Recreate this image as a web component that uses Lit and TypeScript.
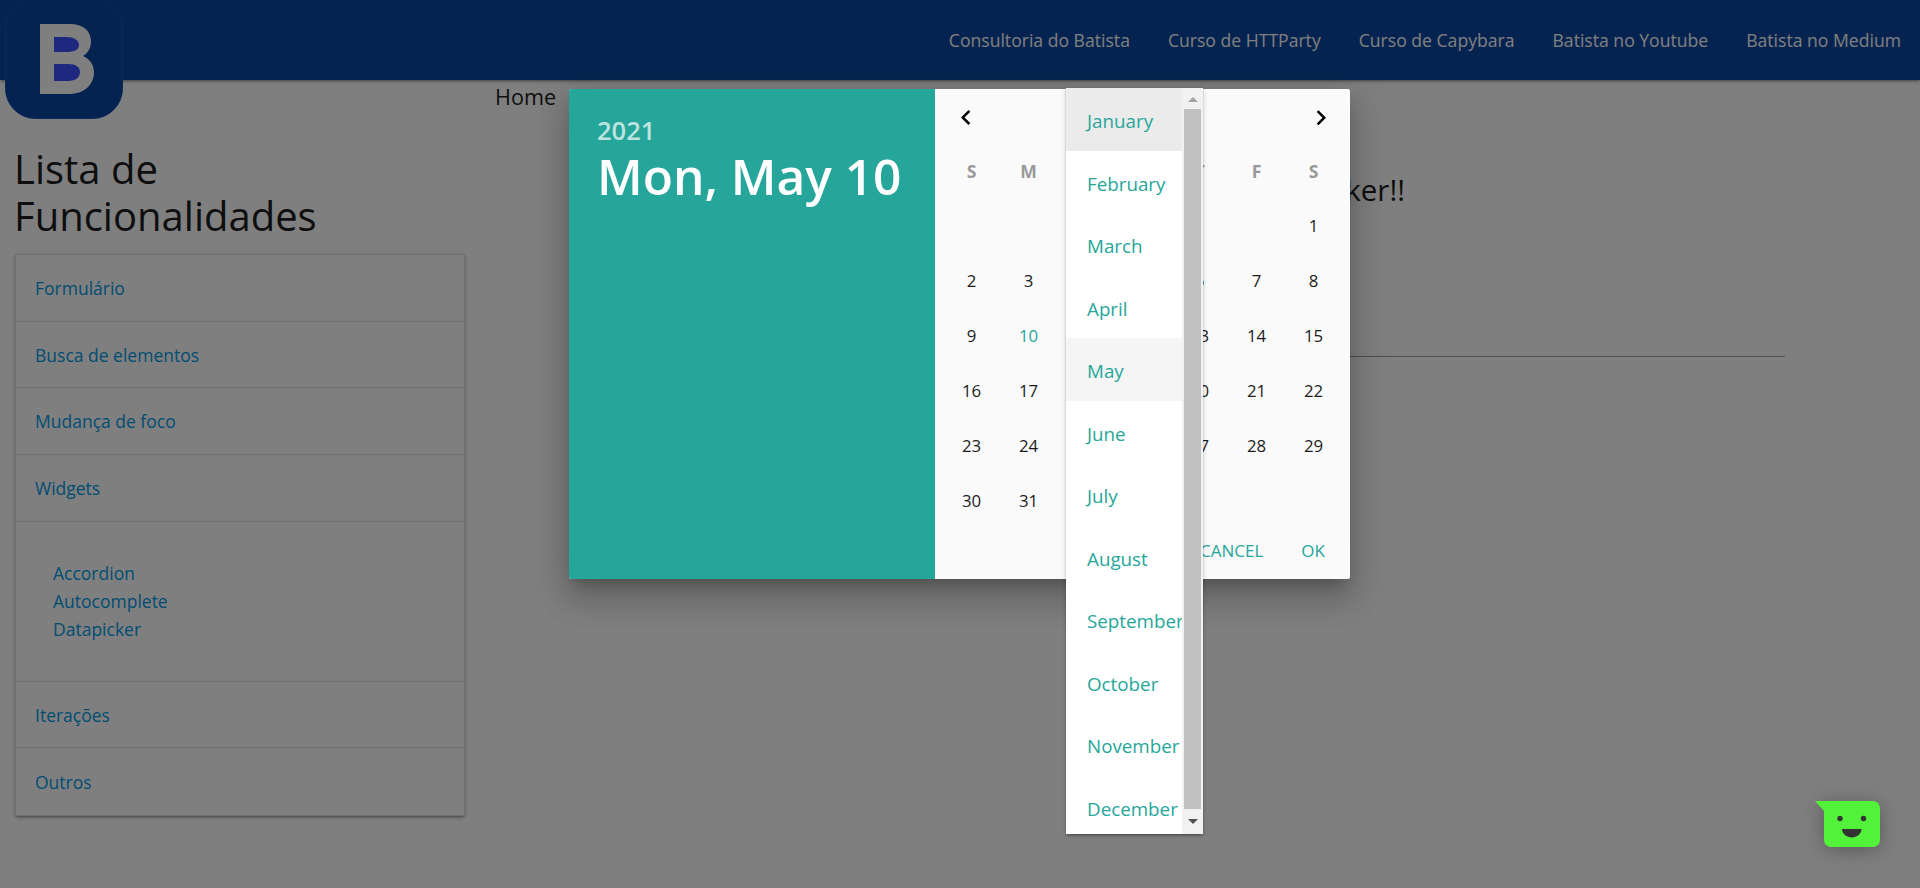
import { LitElement, html, css } from 'lit'
import { customElement } from 'lit/decorators.js'

const NAV_LINKS = ['Consultoria do Batista', 'Curso de HTTParty', 'Curso de Capybara', 'Batista no Youtube', 'Batista no Medium']
const MONTHS = ['January', 'February', 'March', 'April', 'May', 'June', 'July', 'August', 'September', 'October', 'November', 'December']
const WEEKDAYS = ['S', 'M', 'T', 'W', 'T', 'F', 'S']
const FIRST_WEEKDAY = 6
const DAYS_IN_MONTH = 31
const TODAY = 10

@customElement('app-root')
export class AppRoot extends LitElement {
  static styles = css`
    :host {
      display: block;
      position: relative;
      width: 100%;
      height: 100vh;
      overflow: hidden;
      background: #fff;
      font-family: 'Open Sans', 'Noto Sans', sans-serif;
      color: #1c1c1c;
    }
    a { color: #039be5; text-decoration: none; }

    .nav {
      height: 80px;
      background: #0a46a0;
      display: flex;
      justify-content: flex-end;
      align-items: center;
      box-shadow: 0 2px 2px 0 rgba(0, 0, 0, 0.14), 0 3px 1px -2px rgba(0, 0, 0, 0.12), 0 1px 5px 0 rgba(0, 0, 0, 0.2);
    }
    .nav a {
      color: #fff;
      font-size: 17.6px;
      padding: 0 19px;
      line-height: 82px;
      white-space: nowrap;
    }
    .logo {
      position: absolute;
      left: 5px;
      top: 0;
      width: 118px;
      height: 119px;
    }

    .content { display: flex; }
    .side { width: 465px; padding: 65px 0 0 15px; box-sizing: border-box; flex: none; }
    .side h1 {
      margin: 0 0 15px -1px;
      font-size: 40px;
      line-height: 47px;
      font-weight: 400;
    }
    .menu {
      border: 1px solid #e0e0e0;
      box-shadow: 0 2px 2px 0 rgba(0, 0, 0, 0.14), 0 3px 1px -2px rgba(0, 0, 0, 0.12), 0 1px 5px 0 rgba(0, 0, 0, 0.2);
      font-size: 17.5px;
    }
    .row {
      height: 66.7px;
      box-sizing: border-box;
      padding-left: 19px;
      display: flex;
      align-items: center;
      border-bottom: 1px solid #e0e0e0;
    }
    .row:last-child { border-bottom: none; }
    .sub {
      height: 160px;
      box-sizing: border-box;
      padding-left: 37px;
      display: flex;
      flex-direction: column;
      justify-content: center;
      line-height: 28px;
      border-bottom: 1px solid #e0e0e0;
    }

    .main { flex: 1; padding-left: 30px; }
    .crumbs {
      display: flex;
      font-size: 21.6px;
      line-height: 30px;
      margin-top: 2px;
    }
    .crumbs span:nth-child(2) { margin-left: 52px; }
    .crumbs span:nth-child(3) { margin-left: 84px; }
    .title {
      width: 910px;
      margin-top: 59px;
      font-size: 29.5px;
      line-height: 38px;
      text-align: right;
    }
    .rule {
      width: 1190px;
      height: 1px;
      background: #9e9e9e;
      margin: 147px 0 0 100px;
    }

    .overlay {
      position: absolute;
      inset: 0;
      background: rgba(0, 0, 0, 0.5);
    }

    .modal {
      position: absolute;
      left: 569px;
      top: 89px;
      width: 781px;
      height: 490px;
      display: flex;
      border-radius: 2px;
      background: #fafafa;
      box-shadow: 0 20px 30px 3px rgba(0, 0, 0, 0.14), 0 8px 38px 6px rgba(0, 0, 0, 0.12), 0 10px 12px -6px rgba(0, 0, 0, 0.2);
    }
    .date {
      width: 366px;
      flex: none;
      box-sizing: border-box;
      padding: 26px 0 0 28px;
      background: #26a69a;
      color: #fff;
      border-radius: 2px 0 0 2px;
    }
    .date .year {
      font-size: 25.5px;
      line-height: 30px;
      font-weight: 600;
      color: rgba(255, 255, 255, 0.7);
    }
    .date .day {
      font-size: 49.6px;
      line-height: 62px;
      font-weight: 600;
      white-space: nowrap;
    }

    .calendar {
      flex: 1;
      position: relative;
      display: flex;
      flex-direction: column;
      padding-left: 8px;
    }
    .controls {
      height: 56px;
      box-sizing: border-box;
      width: 399px;
      padding: 14px 6px 0 8px;
      display: flex;
      justify-content: space-between;
      font-size: 17.6px;
      line-height: 30px;
      color: rgba(0, 0, 0, 0.87);
    }
    .controls svg { display: block; width: 30px; height: 30px; }
    .controls .label { width: 123px; text-align: right; white-space: nowrap; }
    .grid {
      display: grid;
      grid-template-columns: repeat(7, 57px);
      grid-template-rows: 52.5px repeat(6, 55px);
      place-items: center;
      font-size: 16.8px;
    }
    .grid .head { font-size: 17.6px; font-weight: 700; color: #999; }
    .grid span:not(.head) { padding-top: 2px; }
    .grid .today { color: #26a69a; }
    .actions {
      margin-top: auto;
      height: 52px;
      box-sizing: border-box;
      padding: 0 25px 5px 0;
      display: flex;
      justify-content: flex-end;
      align-items: center;
      gap: 38px;
      font-size: 17px;
      color: #26a69a;
    }

    .months {
      position: absolute;
      left: 131px;
      top: -1px;
      width: 137px;
      height: 746px;
      display: flex;
      background: #fff;
      box-shadow: 0 2px 2px 0 rgba(0, 0, 0, 0.14), 0 3px 1px -2px rgba(0, 0, 0, 0.12), 0 1px 5px 0 rgba(0, 0, 0, 0.2);
    }
    .months ul {
      list-style: none;
      margin: 0;
      padding: 0;
      width: 116px;
      flex: none;
      height: 746px;
      overflow: hidden;
    }
    .months li {
      height: 62.5px;
      box-sizing: border-box;
      padding-left: 21px;
      font-size: 18.8px;
      line-height: 66px;
      color: #26a69a;
      white-space: nowrap;
    }
    .months li.focused { background: #ebebeb; }
    .months li.selected { background: #f5f5f5; }
    .scrollbar {
      flex: 1;
      display: flex;
      flex-direction: column;
      background: #f1f1f1;
    }
    .scrollbar .up, .scrollbar .down {
      display: flex;
      justify-content: center;
      align-items: center;
      flex: none;
    }
    .scrollbar .up { height: 21px; padding-top: 1px; box-sizing: border-box; }
    .scrollbar .down { height: 25px; }
    .scrollbar .up i {
      border: 5px solid transparent;
      border-top: none;
      border-bottom: 5px solid #a3a3a3;
    }
    .scrollbar .down i {
      border: 5px solid transparent;
      border-bottom: none;
      border-top: 5px solid #505050;
    }
    .scrollbar .thumb { flex: 1; margin: 0 2px; background: #c1c1c1; }

    .chat {
      position: absolute;
      left: 1815px;
      top: 801px;
      width: 65px;
      height: 46px;
      filter: drop-shadow(0 3px 10px rgba(0, 0, 0, 0.3));
    }
  `

  private renderDays() {
    const blanks = Array.from({ length: FIRST_WEEKDAY }, () => html`<span></span>`)
    const days = Array.from({ length: DAYS_IN_MONTH }, (_, i) => i + 1)
    return html`
      ${blanks}
      ${days.map((d) => html`<span class=${d === TODAY ? 'today' : ''}>${d}</span>`)}
    `
  }

  render() {
    return html`
      <div class="nav">
        ${NAV_LINKS.map((l) => html`<a href="#">${l}</a>`)}
      </div>
      <svg class="logo" viewBox="0 0 118 119">
        <rect x="0.5" y="-1" width="117" height="119.500" rx="30" fill="#0a46a0" stroke="#1450b4" />
        <path
          fill="#fff"
          fill-rule="evenodd"
          d="M35 24h30c13 0 21 7 21 17 0 7-3 12-8 15 7 3 11 9 11 16 0 13-10 22-25 22H35z"
        />
        <path fill="#3e50fe" d="M49 37h12c8 0 13 3 13 8s-5 7-13 7H49zM49 64h14c8 0 12 3 12 8s-4 9-12 9H49z" />
      </svg>

      <div class="content">
        <div class="side">
          <h1>Lista de<br />Funcionalidades</h1>
          <div class="menu">
            <div class="row"><a href="#">Formulário</a></div>
            <div class="row"><a href="#">Busca de elementos</a></div>
            <div class="row"><a href="#">Mudança de foco</a></div>
            <div class="row"><a href="#">Widgets</a></div>
            <div class="sub">
              <a href="#">Accordion</a>
              <a href="#">Autocomplete</a>
              <a href="#">Datapicker</a>
            </div>
            <div class="row"><a href="#">Iterações</a></div>
            <div class="row"><a href="#">Outros</a></div>
          </div>
        </div>
        <div class="main">
          <div class="crumbs"><span>Home</span><span>Widgets</span><span>Datapicker</span></div>
          <div class="title">Datepicker!!</div>
          <div class="rule"></div>
        </div>
      </div>

      <div class="overlay"></div>

      <div class="modal">
        <div class="date">
          <div class="year">2021</div>
          <div class="day">Mon, May 10</div>
        </div>
        <div class="calendar">
          <div class="controls">
            <svg viewBox="0 0 24 24"><path d="M15.41 16.09l-4.58-4.59 4.58-4.59L14 5.5l-6 6 6 6z" /></svg>
            <span class="label">May 2021</span>
            <svg viewBox="0 0 24 24"><path d="M8.59 16.34l4.58-4.59-4.58-4.59L10 5.75l6 6-6 6z" /></svg>
          </div>
          <div class="grid">
            ${WEEKDAYS.map((d) => html`<span class="head">${d}</span>`)}
            ${this.renderDays()}
          </div>
          <div class="actions"><span>CANCEL</span><span>OK</span></div>
          <div class="months">
            <ul>
              ${MONTHS.map(
                (m, i) => html`<li class=${i === 0 ? 'focused' : i === 4 ? 'selected' : ''}>${m}</li>`
              )}
            </ul>
            <div class="scrollbar">
              <div class="up"><i></i></div>
              <div class="thumb"></div>
              <div class="down"><i></i></div>
            </div>
          </div>
        </div>
      </div>

      <svg class="chat" viewBox="0 0 65 46">
        <path
          fill="#53f23a"
          d="M0 0h58a7 7 0 0 1 7 7v32a7 7 0 0 1-7 7H16a7 7 0 0 1-7-7V10z"
        />
        <circle cx="25" cy="17.500" r="2.700" fill="#333" />
        <circle cx="48.500" cy="17.500" r="2.700" fill="#333" />
        <path fill="#333" d="M27 28h19.500c0 4.500-4.500 8.500-9.700 8.500S27 32.500 27 28z" />
      </svg>
    `
  }
}
